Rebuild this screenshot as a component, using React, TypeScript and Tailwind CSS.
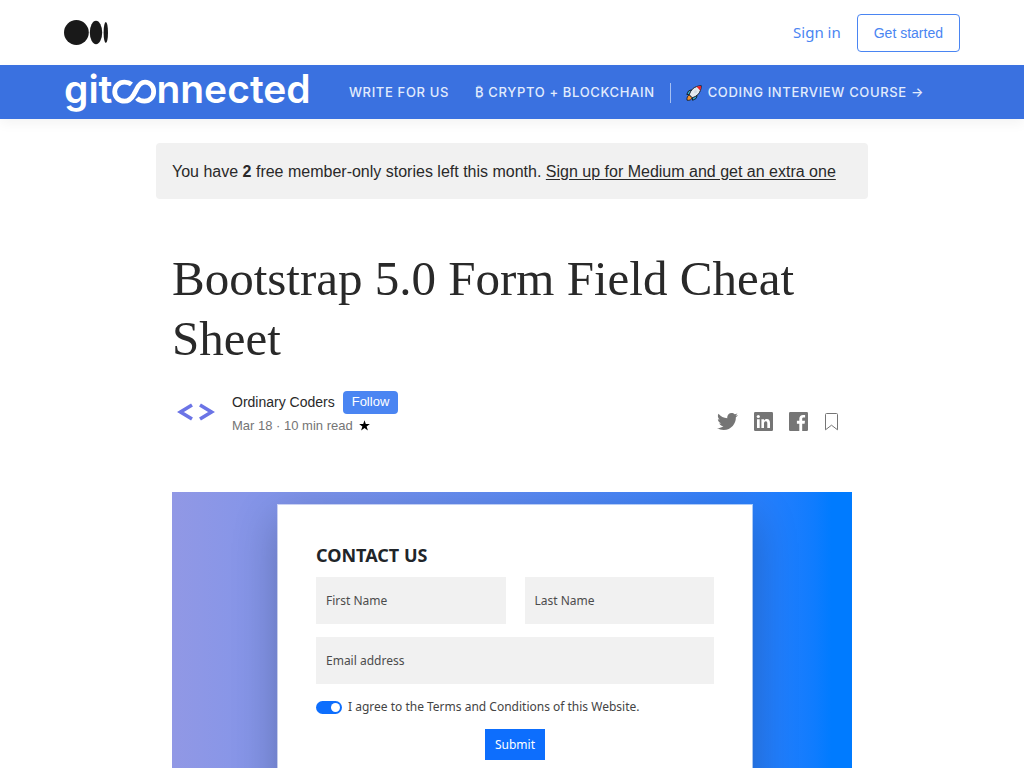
import { FaTwitter } from "react-icons/fa";

function MediumMark() {
  return (
    <svg className="h-[26px] w-11" viewBox="0 0 44 26" fill="#191919" aria-hidden="true">
      <circle cx="12.4" cy="12.500" r="12.4" />
      <ellipse cx="32" cy="12.500" rx="6.2" ry="11.7" />
      <ellipse cx="41.8" cy="12.500" rx="2.2" ry="10.5" />
    </svg>
  );
}

function PublicationLogo() {
  return (
    <a
      href="#"
      aria-label="gitconnected"
      className="flex items-baseline pb-1.5 font-['Inter',sans-serif] text-[39px] leading-[48px] font-semibold text-white"
    >
      <span>git</span>
      <svg className="h-6 w-11 overflow-visible" viewBox="0 0 44 24" fill="none" stroke="#fff" strokeWidth="4.8">
        <path d="M19.500 5.400C17.500 3.800 15.300 3.200 12.500 3.200 6.800 3.200 2.700 7.400 2.700 12.700s4.100 9.500 9.800 9.500c4.800 0 7.200-3 9.500-7l2.300-4.400C26.500 6.300 29 3.200 33 3.200c5 0 8.700 4.200 8.700 9.500S38 22.200 32.500 22.200c-3.200 0-5.800-1-7.600-3" />
      </svg>
      <span>nnected</span>
    </a>
  );
}

function Rocket() {
  return (
    <svg className="size-4" viewBox="0 0 16 16" aria-hidden="true">
      <path d="M5.500 4.800 2.500 6 .8 9.400l3.200.4zM11.200 10.500l-1.200 3-3.400 1.800-.4-3.200z" fill="#31b6df" stroke="#17202b" strokeWidth="1" />
      <path d="M1 15.200c-.3-2.400.4-4.700 2.500-5.200l2.700 2.500c-.4 2.300-2.800 3.200-5.200 2.700z" fill="#f6922a" stroke="#17202b" strokeWidth=".9" />
      <path d="M3.300 9.800C4.500 5 8.200 1 15.300.7c-.3 7.100-4.200 10.800-9.100 12z" fill="#e4e9ed" stroke="#17202b" strokeWidth="1" />
      <path d="M10.600 1.800c1.500-.6 3-.9 4.500-.9 0 1.600-.3 3.100-.9 4.600z" fill="#ee1c25" />
      <circle cx="9.500" cy="6.600" r="1.600" fill="#d3dce2" />
    </svg>
  );
}

function Star() {
  return (
    <svg className="size-[11px]" viewBox="0 0 11 11" aria-hidden="true">
      <path d="M5.500.2 6.800 4.100h4.100L7.600 6.500l1.300 4-3.400-2.500-3.400 2.500 1.300-4L.1 4.100h4.100z" fill="#000" />
    </svg>
  );
}

function LinkedIn() {
  return (
    <svg className="size-[19px]" viewBox="0 0 19 19" aria-hidden="true">
      <rect width="19" height="19" rx="1.200" fill="#757575" />
      <circle cx="4.300" cy="4.500" r="1.600" fill="#fff" />
      <path d="M3 7.200h2.700V16H3zM7.400 7.200H10v1.200c.5-.9 1.500-1.500 2.700-1.500 2.600 0 3.300 1.700 3.300 4.100v5h-2.700v-4.400c0-1.200-.2-2.400-1.500-2.400S10 10.200 10 11.500V16H7.400z" fill="#fff" />
    </svg>
  );
}

function Facebook() {
  return (
    <svg className="size-[19px]" viewBox="0 0 19 19" aria-hidden="true">
      <rect width="19" height="19" rx="1.200" fill="#757575" />
      <path d="M10.300 19v-7.300H7.900V8.800h2.400V6.700c0-2.500 1.500-3.800 3.700-3.800 1 0 1.700.1 2.100.1v2.600h-1.400c-1.200 0-1.500.6-1.500 1.400v1.800h2.800l-.4 2.900h-2.400V19z" fill="#fff" />
    </svg>
  );
}

function Bookmark() {
  return (
    <svg className="h-[19px] w-[15px]" viewBox="0 0 15 19" fill="none" stroke="#757575" aria-hidden="true">
      <path d="M1.500 17.800V2.500q0-1 1-1h10q1 0 1 1v15.300l-6-4.600z" />
    </svg>
  );
}

function Field({ label, type = "text" }: { label: string; type?: string }) {
  return (
    <input
      aria-label={label}
      type={type}
      placeholder={label}
      className="block h-[47px] w-full min-w-0 flex-1 bg-[#f1f1f1] px-2.5 text-xs text-[#444] placeholder:text-[#4c4c4c]"
    />
  );
}

const navLink = "flex items-center gap-1.5 whitespace-nowrap";

export default function App() {
  return (
    <div className="min-h-screen bg-white font-['Liberation_Sans',sans-serif] text-[#292929]">
      <header>
        <div className="flex h-[65px] items-center justify-between px-16">
          <a href="#" aria-label="Medium"><MediumMark /></a>
          <div className="flex items-center gap-4 text-[#4a85f2]">
            <a href="#" className="font-['Noto_Sans',sans-serif] text-[15px]">Sign in</a>
            <button className="h-[38px] rounded border border-[#4a85f2] px-4 text-sm">Get started</button>
          </div>
        </div>
        <div className="flex h-[54px] items-center bg-[#3a71e0] px-16 shadow-[0_4px_12px_rgba(0,0,0,0.05)]">
          <PublicationLogo />
          <nav className="ml-auto flex items-center pt-0.5 pr-9 font-['Inter',sans-serif] text-[13px] font-medium tracking-wider text-[#e2ecfd]">
            <a href="#" className={navLink}>WRITE FOR US</a>
            <a href="#" className={navLink + " ml-[26px]"}>₿ CRYPTO + BLOCKCHAIN</a>
            <span className="mx-[15px] h-5 w-px bg-[#a5c0f3]" />
            <a href="#" className={navLink}><Rocket />CODING INTERVIEW COURSE →</a>
          </nav>
        </div>
      </header>

      <main className="mx-auto max-w-[712px] pt-6">
        <p className="rounded bg-[#f1f1f1] px-4 pt-[17px] pb-[15px] text-base leading-6">
          You have <b>2</b> free member-only stories left this month.{" "}
          <a href="#" className="underline underline-offset-2">Sign up for Medium and get an extra one</a>
        </p>

        <article className="px-4 pt-[50px]">
          <h1 className="font-['Liberation_Serif',serif] text-[49px] leading-[60px]">
            Bootstrap 5.0 Form Field Cheat Sheet
          </h1>

          <div className="mt-5 flex items-center justify-between">
            <div className="flex items-center gap-3">
              <svg className="size-12" viewBox="0 0 48 48" fill="none" stroke="#6b74e6" strokeWidth="3.600" aria-hidden="true">
                <path d="M20 16 8.500 23l11.500 7M28 16l11.500 7-11.500 7" />
              </svg>
              <div className="text-sm">
                <div className="flex items-center gap-2">
                  <a href="#">Ordinary Coders</a>
                  <button className="h-[23px] rounded bg-[#4a85f2] px-[9px] text-[13px] text-white">Follow</button>
                </div>
                <div className="mt-0.5 flex items-center gap-1.5 text-[13px] leading-5 text-[#757575]">
                  <span>Mar 18 · 10 min read</span>
                  <Star />
                </div>
              </div>
            </div>
            <div className="mr-[13px] flex items-center gap-4 pt-4 text-[#757575]">
              <a href="#" aria-label="Share on Twitter"><FaTwitter className="size-[21px]" /></a>
              <a href="#" aria-label="Share on LinkedIn"><LinkedIn /></a>
              <a href="#" aria-label="Share on Facebook"><Facebook /></a>
              <button aria-label="Bookmark"><Bookmark /></button>
            </div>
          </div>

          <div className="mt-[55px] overflow-hidden bg-linear-to-r from-[#9198e5] to-[#007bff] to-97% pt-3 pr-[99px] pb-10 pl-[105px] font-['Noto_Sans',sans-serif]">
            <form className="border border-white/60 bg-white bg-clip-padding px-[38px] pt-10 pb-10 shadow-[0_14px_42px_rgba(0,0,0,0.24)]">
              <h2 className="text-lg leading-5 font-bold text-[#212529]">CONTACT US</h2>
              <div className="mt-3 flex gap-[19px]">
                <Field label="First Name" />
                <Field label="Last Name" />
              </div>
              <div className="mt-[13px] flex"><Field label="Email address" type="email" /></div>
              <label className="mt-[13px] flex items-center gap-1.5 text-xs leading-5 text-[#444]">
                <input
                  type="checkbox"
                  defaultChecked
                  className="flex h-[13px] w-[26px] appearance-none items-center justify-end rounded-full bg-[#0d6efd] px-0.5 before:size-[9px] before:rounded-full before:bg-white"
                />
                I agree to the Terms and Conditions of this Website.
              </label>
              <div className="mt-3 text-center">
                <button type="button" className="h-[31px] bg-[#0d6efd] px-2.5 text-xs text-white">Submit</button>
              </div>
            </form>
          </div>
        </article>
      </main>
    </div>
  );
}
